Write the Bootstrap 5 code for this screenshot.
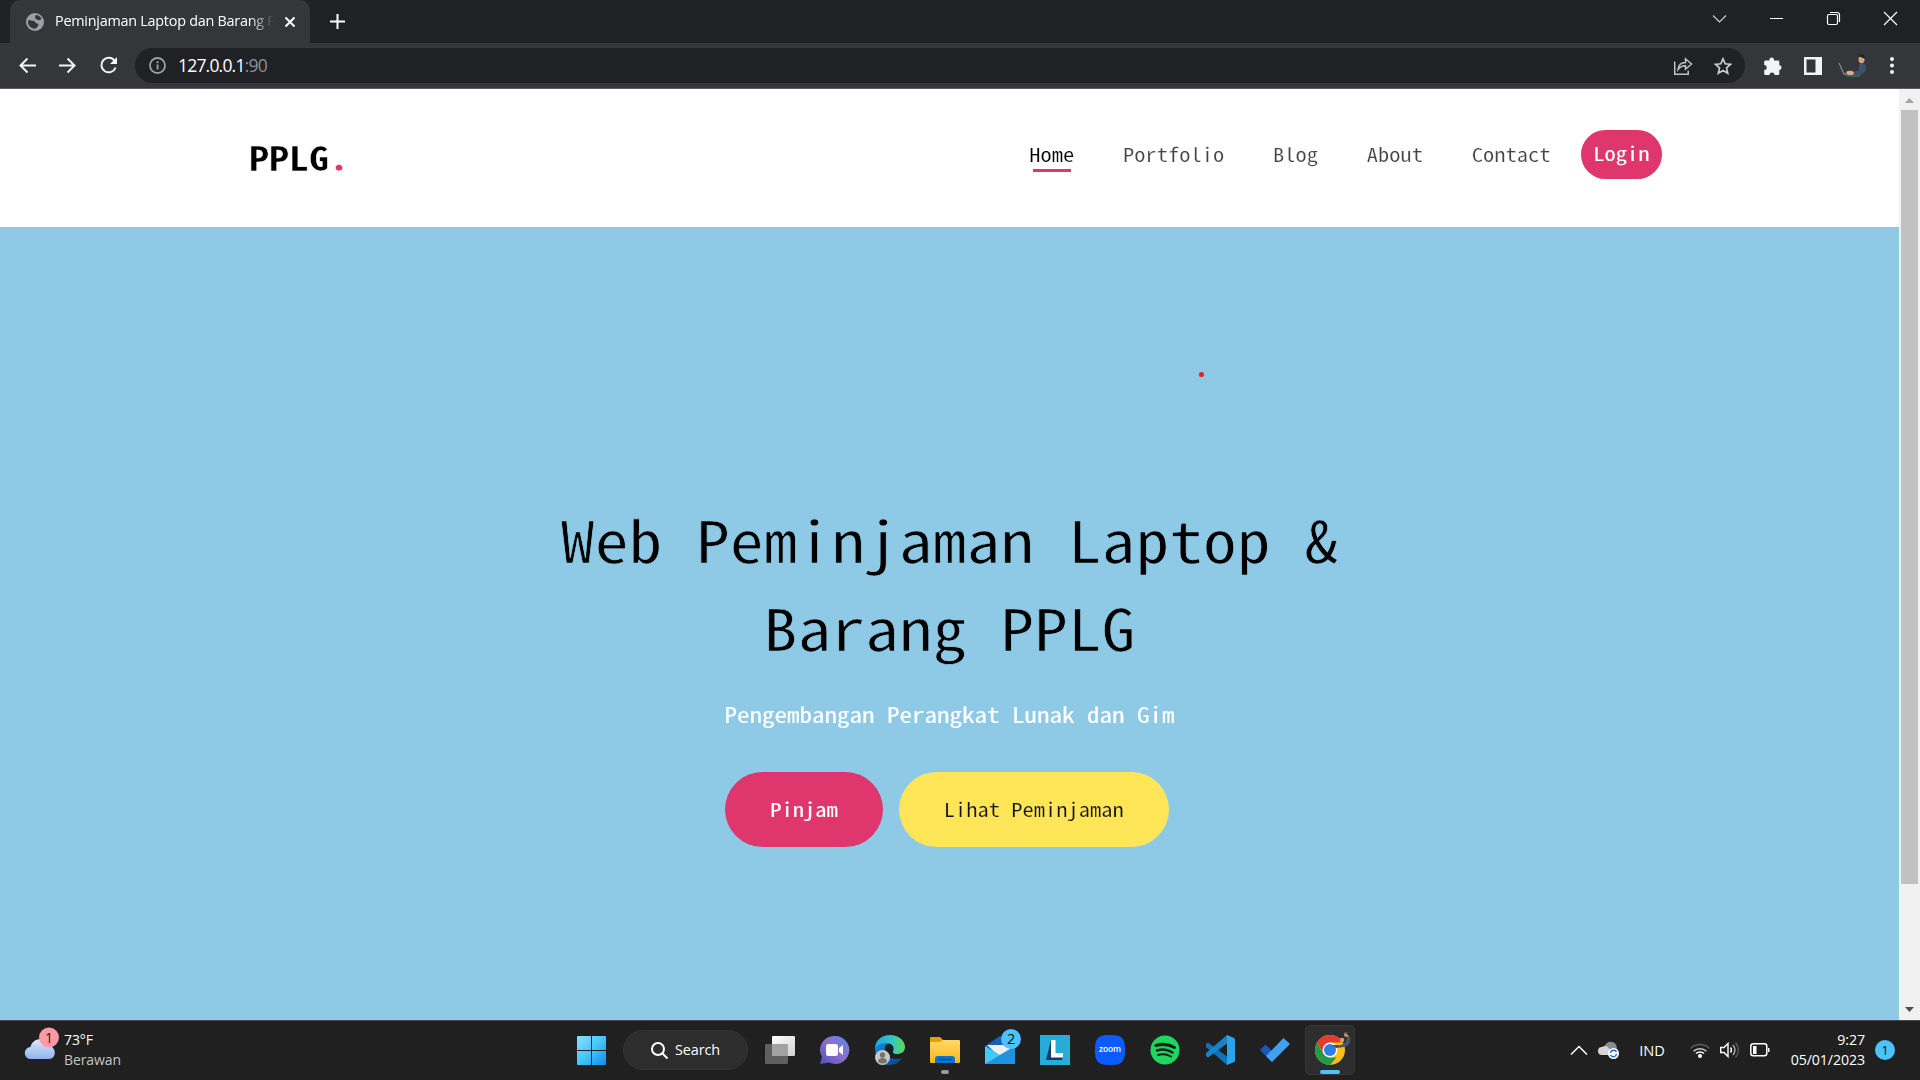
<!DOCTYPE html>
<html lang="id">
<head>
<meta charset="utf-8">
<title>Peminjaman Laptop dan Barang PPLG</title>
<link href="https://cdn.jsdelivr.net/npm/bootstrap@5.3.0/dist/css/bootstrap.min.css" rel="stylesheet">
<style>
:root{--pink:#de366d;--sky:#8ecae6;--sun:#ffe659;--ui:"Segoe UI","Open Sans","Noto Sans",sans-serif;--code:"Noto Sans Mono CJK SC","DejaVu Sans Mono",monospace}
body{width:1920px;height:1080px;overflow:hidden;font-family:var(--ui);background:#fff}
svg{display:block;flex:none;overflow:visible}
.tabstrip{height:43px;background:#202124}
.tab-item{margin-left:10px;width:300px;height:43px;background:#35363a;border-radius:10px 10px 0 0;padding-left:16px;color:#fff}
.tab-title{margin-left:11px;width:221px;font-size:14.4px;letter-spacing:-.25px;line-height:24px;padding-bottom:1px;-webkit-mask-image:linear-gradient(90deg,#000 88%,transparent 99%)}
.toolbar{height:46px;background:#35363a;border-bottom:1px solid #5c5d60}
.address{margin-left:18.4px;width:1610px;height:35px;border-radius:18px;background:#202124;padding:0 17px 0 14px}
.url{font-size:17.5px;color:#fff;margin-left:12px;letter-spacing:-.8px}
.url span{color:#8d9094}
.page{height:931px}
.site-head{height:138px;padding:0 237px 7px 249px}
.squat{display:inline-block;transform:scaleY(.85)}
.brand{font:700 40px/60px var(--code);color:#000;margin-top:5.4px;-webkit-text-stroke:.6px #fff}
.brand span{color:var(--pink)}
.menu{font:400 22.5px/40px var(--code);gap:48.75px;color:#444;margin-bottom:2.6px;-webkit-text-stroke:.25px #fff}
.menu a{color:inherit;text-decoration:none;white-space:nowrap}
.menu a.current{color:#000;background:linear-gradient(var(--pink),var(--pink)) 4px 36px/38px 3px no-repeat}
.login-pill{margin-left:30.5px;width:81px;height:49px;border-radius:25px;background:var(--pink);color:#fff;font:400 22.5px/46px var(--code);text-align:center;-webkit-text-stroke:.1px #fff}
.hero{height:793px;background:var(--sky);padding-top:267px}
.hero h1{font:400 67.6px/103.5px var(--code);color:#000;width:800px;height:176px;margin:0}
.hero h1 span{display:block;transform:scaleY(.85);transform-origin:50% 0;-webkit-text-stroke:.8px var(--sky)}
.hero p{font:400 25px/40px var(--code);color:#fff;margin:24.4px 0 0;-webkit-text-stroke:.2px #fff}
.actions{gap:16px;margin:37.6px 5px 0 0}
.act{height:75px;border-radius:38px;border:0;padding:0 45px 2px;font:400 22.5px/73px var(--code)}
.act-pink{background:var(--pink);color:#fff;-webkit-text-stroke:.2px #fff}
.act-sun{background:var(--sun);color:#111;-webkit-text-stroke:.25px var(--sun)}
.laser{position:absolute;left:1199px;top:372px;width:5px;height:5px;border-radius:50%;background:#e6201f}
.scroll{width:21px;background:#f1f1f1}
.thumb{width:17px;height:774px;background:#c1c1c1}
.taskbar{height:60px;background:#202020;border-top:1px solid #464646;color:#fff;font-size:14px;line-height:20px;letter-spacing:-.1px;padding-bottom:1px}
.weather{width:185px;padding-left:24px}
.search-pill{width:125px;height:40px;border-radius:20px;background:#2d2d2d;border:1px solid #343434;margin:0 4.5px 0 17px}
.cell{width:55px;height:50px}
.cell.active span{display:flex;width:50px;height:50px;border-radius:5px;background:#2d2d2d;border:1px solid #363636}
</style>
<script src="https://cdn.jsdelivr.net/npm/bootstrap@5.3.0/dist/js/bootstrap.bundle.min.js"></script>
</head>
<body class="d-flex flex-column">
<header>
<div class="tabstrip d-flex align-items-center">
  <div class="tab-item d-flex align-items-center">
    <svg width="18" height="18" viewBox="0 0 18 18"><circle cx="9" cy="9" r="9" fill="#9aa0a6"/><path d="M2 7.500c2-.5 4 .5 5.500.5 2 0 1.500 2 3 2.200 2 .3 2.500 1.500 1.500 2.800-1 1-1 2-3 2.700C4.500 15.500 1.500 12 2 7.500zM10 2c2.500.2 4.500 1.500 5.500 4-1 .5-1.500 1.500-3 1S10 7 9.500 5.500 9 3 10 2z" fill="#35363a"/></svg>
    <div class="tab-title text-nowrap">Peminjaman Laptop dan Barang P</div>
    <svg class="ms-2" width="12" height="12" viewBox="0 0 12 12" stroke="#fff" stroke-width="2" fill="none"><path d="M1.500 1.500l9 9M10.500 1.500l-9 9"/></svg>
  </div>
  <svg style="margin-left:20px" width="15" height="15" viewBox="0 0 15 15" stroke="#fff" stroke-width="2"><path d="M7.500 0v15M0 7.500h15"/></svg>
  <div class="d-flex ms-auto align-items-center" style="padding:0 23px 6px 0;gap:44px">
    <svg width="13" height="8" viewBox="0 0 13 8" fill="none" stroke="#ccc" stroke-width="1.200"><path d="M0 .5l6.500 6.500L13 .5"/></svg>
    <svg width="13" height="13" viewBox="0 0 13 13" stroke="#fff"><path d="M0 6.500h13"/></svg>
    <svg width="13" height="13" viewBox="0 0 13 13" fill="none" stroke="#fff" stroke-width="1.200"><rect x=".5" y="2.500" width="10" height="10" rx="1.500"/><path d="M3 .5h7a2.500 2.500 0 0 1 2.500 2.500v7"/></svg>
    <svg width="13" height="13" viewBox="0 0 13 13" stroke="#fff" stroke-width="1.200"><path d="M0 0l13 13M13 0L0 13"/></svg>
  </div>
</div>
<div class="toolbar d-flex align-items-center">
  <div class="d-flex" style="padding-left:19px;gap:23.300px">
    <svg width="17" height="17" viewBox="0 0 17 17" fill="none" stroke="#f1f3f4" stroke-width="2"><path d="M17 8.500H2M8.500 1.500l-7 7 7 7"/></svg>
    <svg width="17" height="17" viewBox="0 0 17 17" fill="none" stroke="#f1f3f4" stroke-width="2"><path d="M0 8.500h15M8.500 1.500l7 7-7 7"/></svg>
    <svg width="17" height="17" viewBox="0 0 17 17" fill="none" stroke="#f1f3f4" stroke-width="2"><path d="M14.700 3.800A7.300 7.300 0 1 0 15.600 10.500"/><path d="M17 0v7h-7z" fill="#f1f3f4" stroke="none"/></svg>
  </div>
  <div class="address d-flex align-items-center">
    <svg width="17" height="17" viewBox="0 0 17 17"><circle cx="8.500" cy="8.500" r="7.500" fill="none" stroke="#9aa0a6" stroke-width="1.800"/><path d="M7.600 7.500h1.900v5H7.600zM7.600 4.300h1.900v1.900H7.600z" fill="#9aa0a6"/></svg>
    <div class="url">127.0.0.1<span>:90</span></div>
    <div class="d-flex ms-auto" style="gap:22px">
      <svg width="18" height="18" viewBox="0 0 18 18" fill="none" stroke="#c0c3c6" stroke-width="1.500"><path d="M.7 4.500v12.700h13.500v-3.500"/><path d="M4 12.500c.5-4.500 3-7 7.500-7V1.800l6 5.200-6 5.200V8.800c-3.500 0-5.500 1-7.500 3.700z"/></svg>
      <svg style="margin-right:-4px" width="18" height="18" viewBox="0 0 18 18" fill="none" stroke="#c8cacd" stroke-width="1.700"><path d="M9 1.800l2.200 5 5.300.5-4 3.600 1.200 5.300L9 13.400l-4.700 2.800 1.200-5.300-4-3.600 5.300-.5z"/></svg>
    </div>
  </div>
  <div class="d-flex align-items-center" style="margin-left:19px">
    <svg width="18" height="18" viewBox="0 0 18 18" fill="#f1f3f4"><path d="M1.500 3.500H5.500a2.300 2.300 0 1 1 4.400 0H14a1.300 1.300 0 0 1 1.300 1.300v3.500a2.300 2.300 0 0 1 0 4.600v4A1.300 1.300 0 0 1 14 18h-3.500a2.500 2.500 0 0 0-5 0h-4A1.300 1.300 0 0 1 .2 16.800V13a2.500 2.500 0 0 0 0-5V4.800A1.300 1.300 0 0 1 1.500 3.500z"/></svg>
    <svg style="margin-left:22px" width="18" height="18" viewBox="0 0 18 18"><path fill="#f1f3f4" fill-rule="evenodd" d="M0 0h18v18H0zM2.500 2.500v13h9v-13z"/></svg>
    <svg style="margin:0 23px 0 17px" width="28" height="23" viewBox="0 0 28 23"><path d="M0 9l5 11h10" fill="none" stroke="#7d8590" stroke-width="1.300"/><path d="M6 21h16l-2 2H8z" fill="#2c6a44"/><path d="M20 10l4-1c3 2 4 5 2 8-2 4-6 5-12 4l1-3 5-2z" fill="#3d5070"/><path d="M7 18c3-2 6-1 8 0l-1 3H9z" fill="#dfa78f"/><ellipse cx="22.500" cy="5.500" rx="3" ry="3.800" fill="#d9a080"/><path d="M19 3q2-4 6-2l1 4-2-1-4-1.500z" fill="#222"/></svg>
    <svg width="4" height="17" viewBox="0 0 4 17" fill="#f1f3f4"><circle cx="2" cy="2" r="2"/><circle cx="2" cy="8.500" r="2"/><circle cx="2" cy="15" r="2"/></svg>
  </div>
</div>
</header>
<main class="page d-flex">
  <div class="flex-grow-1">
    <div class="site-head d-flex align-items-center">
      <div class="brand squat">PPLG<span>.</span></div>
      <nav class="d-flex ms-auto align-items-center">
        <div class="menu d-flex"><a class="current"><span class="squat">Home</span></a><a><span class="squat">Portfolio</span></a><a><span class="squat">Blog</span></a><a><span class="squat">About</span></a><a><span class="squat">Contact</span></a></div>
        <div class="login-pill"><span class="squat">Login</span></div>
      </nav>
    </div>
    <section class="hero d-flex flex-column align-items-center text-center">
      <h1><span>Web Peminjaman Laptop &amp; Barang PPLG</span></h1>
      <p class="squat">Pengembangan Perangkat Lunak dan Gim</p>
      <div class="actions d-flex"><button class="act act-pink"><span class="squat">Pinjam</span></button><button class="act act-sun"><span class="squat">Lihat Peminjaman</span></button></div>
    </section>
    <i class="laser"></i>
  </div>
  <div class="scroll d-flex flex-column align-items-center">
    <svg style="margin:9px 0 7px" width="9" height="5" viewBox="0 0 9 5"><path d="M0 5L4.500 0 9 5z" fill="#a3a3a3"/></svg>
    <div class="thumb"></div>
    <svg class="mt-auto" style="margin-bottom:8px" width="9" height="5" viewBox="0 0 9 5"><path d="M0 0h9L4.500 5z" fill="#505050"/></svg>
  </div>
</main>
<footer class="taskbar d-flex align-items-center">
  <div class="weather d-flex">
    <svg width="36" height="36" viewBox="0 0 36 36"><defs><linearGradient id="cl" x2="0" y2="1"><stop stop-color="#dce8fb"/><stop offset="1" stop-color="#8fb3ec"/></linearGradient></defs><path transform="translate(0 -2)" d="M7 31a6 6 0 0 1-.5-12C8 12 15 10 19 12c4 1 6 4 6 6 8 1 7.500 13 0 13z" fill="url(#cl)"/><circle cx="25" cy="7.500" r="10" fill="#ff99a4"/><text x="25" y="12.500" font-size="14" text-anchor="middle" fill="#222">1</text></svg>
    <div style="margin-left:4px"><div>73°F</div><div style="color:#c5c5c5">Berawan</div></div>
  </div>
  <div class="d-flex align-items-center" style="margin-left:392px">
    <svg width="29" height="29" viewBox="0 0 29 29"><defs><linearGradient id="wn" gradientUnits="userSpaceOnUse" x2="29" y2="29"><stop stop-color="#8be0ff"/><stop offset=".5" stop-color="#45c6fa"/><stop offset="1" stop-color="#0a8cf5"/></linearGradient></defs><path d="M0 1q0-1 1-1h13v14H0zM15 0h13q1 0 1 1v13H15zM0 15h14v14H1q-1 0-1-1zM15 15h14v13q0 1-1 1H15z" fill="url(#wn)"/></svg>
    <div class="search-pill d-flex align-items-center justify-content-center"><svg width="17" height="17" viewBox="0 0 17 17" fill="none" stroke="#fff" stroke-width="2"><circle cx="7" cy="7" r="6"/><path d="M11.500 11.500l5 5"/></svg><span style="margin-left:7px;font-size:14.400px">Search</span></div>
    <div class="cell d-flex align-items-center justify-content-center"><svg width="30" height="28" viewBox="0 0 30 28"><defs><linearGradient id="tv" x2="1" y2="1"><stop stop-color="#fff"/><stop offset="1" stop-color="#d0d0d0"/></linearGradient></defs><rect x="7" width="23" height="20" rx="1" fill="url(#tv)"/><rect y="8" width="23" height="20" rx="1" fill="#5f5f5f"/><rect x="7" y="8" width="16" height="12" fill="#a2a2a2"/></svg></div>
    <div class="cell d-flex align-items-center justify-content-center"><svg style="margin-right:2px" width="29" height="28" viewBox="0 0 29 28"><defs><linearGradient id="ch" x1="1" x2="0" y2="1"><stop stop-color="#5a8be8"/><stop offset=".5" stop-color="#8a6fc9"/><stop offset="1" stop-color="#4f52c4"/></linearGradient></defs><path d="M15 0a14 14 0 1 1-6 26.500L0 28l2-7A14 14 0 0 1 15 0z" fill="url(#ch)"/><rect x="6" y="8" width="12" height="12" rx="2.500" fill="#fff"/><path d="M19 12l4-3v10l-4-3z" fill="#fff"/></svg></div>
    <div class="cell d-flex align-items-center justify-content-center"><svg width="30" height="30" viewBox="0 0 30 30"><defs><linearGradient id="ea" x2="1"><stop stop-color="#1fa4e4"/><stop offset=".6" stop-color="#34c7c0"/><stop offset="1" stop-color="#62d94e"/></linearGradient><linearGradient id="eb" x2="1" y2="1"><stop stop-color="#1390dd"/><stop offset="1" stop-color="#0c3f85"/></linearGradient></defs><path d="M0 14C2 5 10 3 16 8c-5 0-7 4-6 8 1 6 8 10 17 7-3 5-8 7-13 7C6 30 0 23 0 14z" fill="url(#eb)"/><path d="M0 14C0 5 7 0 15 0c9 0 15 6 15 12 0 5-4 7-8 7-4 0-5-2-4-3 2-4-1-8-7-8C5 8 1 11 0 14z" fill="url(#ea)"/><path d="M12 15q1-3 4-3 3 1 2 4-1 2 1 3-6 1-7-4z" fill="#151d26"/><circle cx="7.500" cy="22.500" r="7.500" fill="#c9c7c4"/><circle cx="7.500" cy="20" r="2.700" fill="#77736f"/><path d="M3 27q0-4 4.500-4t4.500 4q-4 3-9 0z" fill="#77736f"/></svg></div>
    <div class="cell d-flex align-items-center justify-content-center"><svg width="30" height="30" viewBox="0 0 30 30"><defs><linearGradient id="fo" x2="0" y2="1"><stop stop-color="#ffd968"/><stop offset="1" stop-color="#fbb612"/></linearGradient></defs><path d="M0 3q0-1 1-1h9l3 3v5H0z" fill="#e6a100"/><path d="M0 7h10l3-2h16q1 0 1 1v21q0 1-1 1H1q-1 0-1-1z" fill="url(#fo)"/><path d="M5 28v-4q0-3 3-3h14q3 0 3 3v4z" fill="#0c74d0"/><path d="M8.500 24.500h13" stroke="#0a4e96" stroke-width="1.500"/><rect x="11" y="35" width="8" height="4" rx="2" fill="#9a9a9a"/></svg></div>
    <div class="cell d-flex align-items-center justify-content-center"><svg width="30" height="30" viewBox="0 0 30 30"><path d="M0 11L15 1l15 10v18H0z" fill="#1562b0"/><path d="M2 10h26v10L15 22z" fill="#f0f0f0"/><path d="M0 11l15 9 15-9v18H0z" fill="#43c9f8"/><path d="M0 29l30-18v18z" fill="#1f93e0"/><circle cx="26" cy="4" r="10" fill="#4cc2ff"/><text x="26" y="9" font-size="14.500" text-anchor="middle" fill="#111">2</text></svg></div>
    <div class="cell d-flex align-items-center justify-content-center"><svg width="30" height="30" viewBox="0 0 30 30"><path fill="#26acd9" d="M0 0h30v30H0z"/><path d="M11 5L6 25l5-3z" fill="#153a6b"/><path d="M6 25l5-4h12l-1 4z" fill="#153a6b"/><path d="M11 5h4.500v13H23v4.500H11z" fill="#fff"/></svg></div>
    <div class="cell d-flex align-items-center justify-content-center"><svg width="30" height="30" viewBox="0 0 30 30"><path d="M15 0c12 0 15 3 15 15s-3 15-15 15S0 27 0 15 3 0 15 0z" fill="#0b5cff"/><text x="15" y="17" font-size="9" font-weight="600" text-anchor="middle" fill="#fff" textLength="22" lengthAdjust="spacingAndGlyphs">zoom</text></svg></div>
    <div class="cell d-flex align-items-center justify-content-center"><svg width="30" height="30" viewBox="0 0 30 30"><circle cx="15" cy="15" r="14.500" fill="#1ed760"/><g fill="none" stroke="#15201a" stroke-linecap="round"><path d="M6 10.500q10-3 18.500 2" stroke-width="3"/><path d="M7 15.500q8.500-2.500 15.500 2" stroke-width="2.500"/><path d="M8 20q7-2 13 1.500" stroke-width="2"/></g></svg></div>
    <div class="cell d-flex align-items-center justify-content-center"><svg width="30" height="30" viewBox="0 0 30 30"><path d="M1 9l2-1.500 19 14V30L1 12z" fill="#0b74bd"/><path d="M1 21l2 1.500 19-14V0L1 18z" fill="#1484cd"/><path d="M22 0l7 3q1 .5 1 1.500v21q0 1-1 1.500l-7 3z" fill="#2ba3ea"/></svg></div>
    <div class="cell d-flex align-items-center justify-content-center"><svg width="30" height="24" viewBox="0 0 30 24"><path d="M0 12l5.500-5.500L17 18l-5.500 6z" fill="#1b56b8"/><path d="M6 18L23.500 0 30 6 12 24z" fill="#3f9ff0"/></svg></div>
    <div class="cell active d-flex align-items-center justify-content-center"><span class="align-items-center justify-content-center"><svg width="30" height="30" viewBox="0 0 30 30"><circle cx="15" cy="15" r="15" fill="#fbc116"/><path d="M2 7.500A15 15 0 0 1 28 7.500H15L8.500 18.700z" fill="#e33b2e"/><path d="M2 7.500l6.500 11.200L15 22.500h6.500L15 30A15 15 0 0 1 2 7.500z" fill="#229a48"/><circle cx="15" cy="15" r="7.500" fill="#fff"/><circle cx="15" cy="15" r="6" fill="#2f7de6"/><path d="M17 10l9 0 5-3 1-6 3 1c1 5-1 9-6 10l-8 1z" fill="#46546a"/><circle cx="27" cy="5" r="2.300" fill="#d99878"/><circle cx="31.500" cy="-.5" r="2.500" fill="#c48c70"/><path d="M29-1q2-3 5-1l1 3-2-1-2-2z" fill="#2a2320"/><rect x="5" y="35" width="20" height="4" rx="2" fill="#4cc2ff"/></svg></span></div>
  </div>
  <div class="d-flex align-items-center ms-auto" style="padding-right:25px">
    <svg width="16" height="9" viewBox="0 0 16 9" fill="none" stroke="#fff" stroke-width="1.500"><path d="M0 8.500l8-8 8 8"/></svg>
    <svg style="margin:0 20px 0 12px" width="20" height="17" viewBox="0 0 20 17"><path d="M5 5q3-6 8-5 5 1 5 7l-8 5z" fill="#8b8b8b"/><path d="M3 13a4 4 0 0 1 0-8q5-3 8 3l1 5z" fill="#d6d6d6"/><circle cx="14.500" cy="11.500" r="5.500" fill="#fff"/><path d="M11.500 11a3.200 3.200 0 0 1 6-1M17.500 12a3.200 3.200 0 0 1-6 1" fill="none" stroke="#1271c9" stroke-width="1.500"/></svg>
    <span style="font-size:14.600px">IND</span>
    <svg style="margin-left:25px" width="20" height="16" viewBox="0 0 20 16" fill="none" stroke="#fff" stroke-width="1.500"><path d="M.5 6.500a13.500 13.500 0 0 1 19 0" stroke="#5a5a5a"/><path d="M3.500 9.300a9.500 9.500 0 0 1 13 0" stroke="#ccc"/><path d="M6 11.500a5.800 5.800 0 0 1 8 0"/><circle cx="10" cy="14" r="1.300" fill="#fff"/></svg>
    <svg style="margin:0 10px" width="20" height="16" viewBox="0 0 20 16" fill="none" stroke="#fff" stroke-width="1.400"><path d="M.7 5.500h3.300l4-4v13l-4-4H.7z"/><path d="M10.500 5.500q2 2.500 0 5"/><path d="M13 3q4 5 0 10" stroke="#aaa"/><path d="M15.500.5q6 7.500 0 15" stroke="#5a5a5a"/></svg>
    <svg width="20" height="14" viewBox="0 0 20 14" fill="none" stroke="#fff" stroke-width="1.500"><rect x=".8" y=".8" width="16" height="12" rx="2.500"/><path d="M3 3h3.500v8H3zM18 5h1.500v4H18z" fill="#fff" stroke="none"/></svg>
    <div class="text-end" style="margin-left:21px;font-size:14.200px"><div>9:27</div><div>05/01/2023</div></div>
    <svg style="margin-left:10px" width="20" height="20" viewBox="0 0 20 20"><circle cx="10" cy="10" r="10" fill="#4cc2ff"/><text x="10" y="14.500" font-size="12.500" text-anchor="middle" fill="#111">1</text></svg>
  </div>
</footer>
</body>
</html>
